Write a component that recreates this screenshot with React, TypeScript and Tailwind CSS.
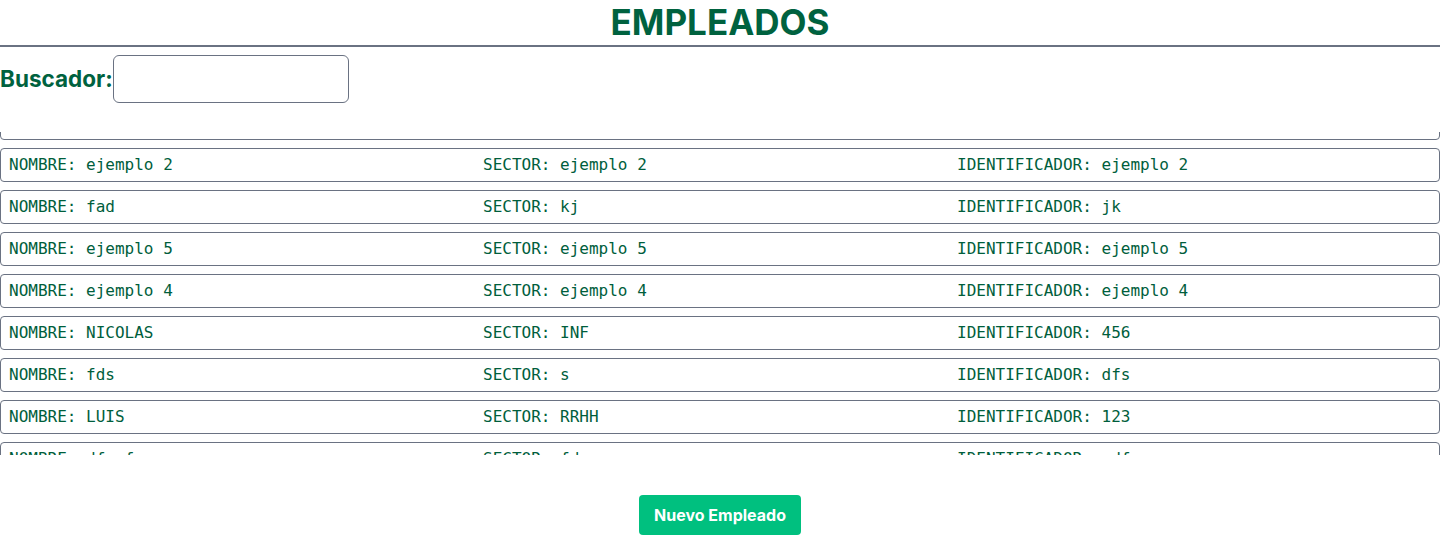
import { useState } from "react";

type Empleado = { nombre: string; sector: string; identificador: string };

const empleados: Empleado[] = [
  { nombre: "ejemplo 1", sector: "ejemplo 1", identificador: "ejemplo 1" },
  { nombre: "ejemplo 2", sector: "ejemplo 2", identificador: "ejemplo 2" },
  { nombre: "fad", sector: "kj", identificador: "jk" },
  { nombre: "ejemplo 5", sector: "ejemplo 5", identificador: "ejemplo 5" },
  { nombre: "ejemplo 4", sector: "ejemplo 4", identificador: "ejemplo 4" },
  { nombre: "NICOLAS", sector: "INF", identificador: "456" },
  { nombre: "fds", sector: "s", identificador: "dfs" },
  { nombre: "LUIS", sector: "RRHH", identificador: "123" },
  { nombre: "dfasf", sector: "fd", identificador: "adf" }
];

export default function App() {
  const [busqueda, setBusqueda] = useState("");

  const lista = empleados.filter((e) =>
    `${e.nombre} ${e.sector} ${e.identificador}`.toLowerCase().includes(busqueda.toLowerCase())
  );

  return (
    <div className="h-[535px] w-full overflow-hidden bg-white font-['Inter',sans-serif]">
      <h1 className="border-b-2 border-gray-500 text-center text-[35px] font-bold leading-[45px] text-[#00623f]">
        EMPLEADOS
      </h1>
      <div className="mt-2 flex items-center">
        <label htmlFor="buscador" className="text-[22.5px] font-bold text-[#00623f]">
          Buscador:
        </label>
        <input
          id="buscador"
          value={busqueda}
          onChange={(e) => setBusqueda(e.target.value)}
          className="h-12 w-[236px] rounded-md border border-gray-500 px-2 outline-none"
        />
      </div>
      <div className="mt-[29px] h-[323px] overflow-hidden">
        <div className="-mt-[26px] flex flex-col gap-2">
          {lista.map((e, i) => (
            <div
              key={i}
              className="grid grid-cols-3 rounded border border-gray-500 px-2 py-1 font-['DejaVu_Sans_Mono',monospace] text-base leading-6 text-[#005e3c]"
            >
              <span>NOMBRE: {e.nombre}</span>
              <span>SECTOR: {e.sector}</span>
              <span>IDENTIFICADOR: {e.identificador}</span>
            </div>
          ))}
        </div>
      </div>
      <div className="mt-10 flex justify-center">
        <button className="h-10 rounded bg-[#00c07f] px-[15px] text-base font-bold text-white">
          Nuevo Empleado
        </button>
      </div>
    </div>
  );
}
